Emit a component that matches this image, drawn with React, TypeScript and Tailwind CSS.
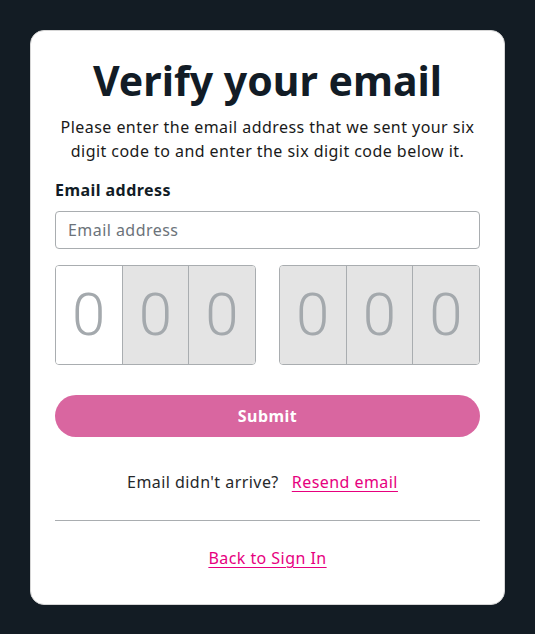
import { useState } from "react";

const font = { fontFamily: '"Noto Sans", "Liberation Sans", sans-serif' };

function CodeGroup({ values, active }: { values: string[]; active?: number }) {
  return (
    <div className="flex h-[100px] w-[201px] overflow-hidden rounded-[4px] border border-[#a9adb0]">
      {values.map((v, i) => (
        <div
          key={i}
          className={`flex flex-1 items-center justify-center text-[60px] font-light text-[#a4a9ad] ${
            i > 0 ? "border-l border-[#a9adb0]" : ""
          } ${i === active ? "bg-white" : "bg-[#e4e4e4]"}`}
          style={{ fontFamily: 'Roboto, "Noto Sans", sans-serif' }}
        >
          {v}
        </div>
      ))}
    </div>
  );
}

export default function App() {
  const [email, setEmail] = useState("");

  return (
    <div className="min-h-screen bg-[#131c24] p-[30px] tracking-[0.45px]" style={font}>
      <div className="rounded-[14px] border border-[#d6d6d6] bg-white px-[24px] pt-[22px] pb-[34px] text-[#121c26]">
        <h1 className="text-center text-[41px] leading-[54px] font-bold tracking-[0px]">
          Verify your email
        </h1>
        <p className="mx-auto mt-[8px] text-center text-[16px] leading-[24px] text-[#1a1a1a]">
          Please enter the email address that we sent your six
          <br />
          digit code to and enter the six digit code below it.
        </p>

        <label className="mt-[15px] block text-[16px] leading-[24px] font-bold">Email address</label>
        <input
          value={email}
          onChange={(e) => setEmail(e.target.value)}
          placeholder="Email address"
          className="mt-[9px] h-[38px] w-full rounded-[4px] border border-[#a9adb0] px-[12px] text-[16px] tracking-[0.45px] text-[#121c26] placeholder:text-[#6c737a] outline-none"
        />

        <div className="mt-[16px] flex justify-between">
          <CodeGroup values={["0", "0", "0"]} active={0} />
          <CodeGroup values={["0", "0", "0"]} />
        </div>

        <button className="mt-[30px] h-[42px] w-full rounded-full bg-[#d966a0] text-[16px] font-bold tracking-[0.45px] text-white">
          Submit
        </button>

        <div className="mt-[33px] flex items-center justify-center gap-[13px] pr-[10px] text-[16px] leading-[24px]">
          <span className="text-[#26282b]">Email didn't arrive?</span>
          <a href="#" className="text-[#e6007e] underline underline-offset-[3px]">
            Resend email
          </a>
        </div>

        <hr className="mt-[26px] border-t border-[#a9adb0]" />

        <div className="mt-[25px] text-center text-[16px] leading-[24px]">
          <a href="#" className="text-[#e6007e] underline underline-offset-[3px]">
            Back to Sign In
          </a>
        </div>
      </div>
    </div>
  );
}
